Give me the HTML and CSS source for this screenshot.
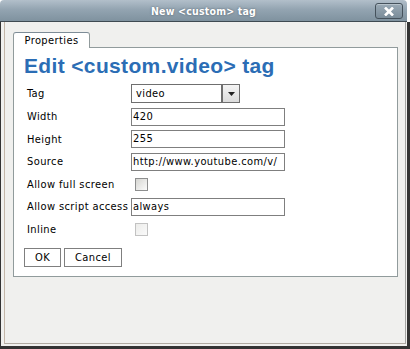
FILE: index.html
```html
<!DOCTYPE html>
<html lang="en">
<head>
    <meta charset="UTF-8">
    <title>New &lt;custom&gt; tag</title>
    <link rel="stylesheet" href="styles.css">
</head>
<body>
    <div class="window">
        <div class="titlebar">
            <span class="title">New &lt;custom&gt; tag</span>
            <span class="close">
                <svg width="10" height="9" viewBox="0 0 10 9">
                    <path d="M1 0.5 L9 8.5 M9 0.5 L1 8.5" stroke="#fff" stroke-width="2.6"/>
                </svg>
            </span>
        </div>
        <div class="frame">
            <div class="inner">
                <div class="tab">Properties</div>
                <div class="panel">
                    <h1>Edit &lt;custom.video&gt; tag</h1>
                    <div class="form">
                        <label>Tag</label>
                        <div class="select">
                            <span class="select-value">video</span>
                            <span class="select-arrow">
                                <svg width="7" height="4" viewBox="0 0 7 4"><path d="M0 0 H7 L3.5 4 Z" fill="#222"/></svg>
                            </span>
                        </div>

                        <label>Width</label>
                        <div class="field">420</div>

                        <label>Height</label>
                        <div class="field">255</div>

                        <label>Source</label>
                        <div class="field">http://www.youtube.com/v/</div>

                        <label>Allow full screen</label>
                        <span class="check"></span>

                        <label>Allow script access</label>
                        <div class="field">always</div>

                        <label>Inline</label>
                        <span class="check disabled"></span>
                    </div>
                    <div class="buttons">
                        <button class="ok">OK</button>
                        <button class="cancel">Cancel</button>
                    </div>
                </div>
            </div>
        </div>
    </div>
</body>
</html>
```

FILE: styles.css
```css
body {
    margin: 0;
    background-color: #fff;
    font-family: "DejaVu Sans Condensed", "DejaVu Sans", sans-serif;
    font-size: 11px;
    letter-spacing: 0.4px;
    color: #000;
}
.window {
    width: 410px;
    height: 349px;
    display: flex;
    flex-direction: column;
}
.titlebar {
    position: relative;
    width: 407px;
    height: 21px;
    border-bottom: 1px solid #3f4a52;
    border-radius: 4px 4px 0 0;
    background: linear-gradient(#b2bfca, #93a4b1 45%, #7f929f);
    display: flex;
    align-items: center;
    justify-content: center;
}
.title {
    color: #fff;
    font-weight: bold;
    font-size: 10.5px;
    letter-spacing: 0.2px;
    text-shadow: 0 0 2px rgba(40,50,60,0.6);
}
.close {
    position: absolute;
    left: 375px;
    top: 3px;
    width: 26px;
    height: 14px;
    border: 1px solid #45525c;
    border-radius: 3px;
    background: linear-gradient(#9aaab6, #7a8c99);
    box-shadow: inset 0 1px 0 rgba(255,255,255,0.3);
    display: flex;
    align-items: center;
    justify-content: center;
}
.frame {
    flex: 1;
    border-left: 1px solid #333;
    border-right: 3px solid #333;
    border-bottom: 3px solid #333;
    padding: 0 1px 2px 3px;
    background-color: #f0f0ee;
    display: flex;
}
.inner {
    flex: 1;
    border: 1px solid #c3b6a8;
    border-top: none;
    border-right-color: #a4a4a2;
    border-bottom-color: #b0aaa2;
    padding: 10px 7px 0 8px;
}
.tab {
    width: 75px;
    height: 15px;
    border: 1px solid #919b9c;
    border-top-color: #7d8c97;
    border-bottom: none;
    border-radius: 3px 3px 0 0;
    background-color: #fff;
    margin-bottom: -1px;
    position: relative;
    line-height: 16px;
    text-align: center;
}
.panel {
    border: 1px solid #919b9c;
    background-color: #fff;
    padding: 0 0 9px 10px;
}
h1 {
    margin: 6px 0 4px 0;
    font-family: "Liberation Sans", Arial, sans-serif;
    font-size: 21px;
    line-height: 24px;
    letter-spacing: 0.35px;
    font-weight: bold;
    color: #2b6db5;
}
.form {
    display: grid;
    grid-template-columns: 104px 1fr;
    grid-template-rows: 23px 23px 22px 23px 22px 23px 22px;
    align-items: center;
    padding-left: 3px;
}
.field {
    width: 150px;
    height: 16px;
    border: 1px solid #7f7f7f;
    padding: 0 1px;
    line-height: 16px;
    white-space: nowrap;
    overflow: hidden;
}
.select {
    width: 107px;
    height: 17px;
    border: 1px solid #6f6f6f;
    display: flex;
}
.select-value {
    flex: 1;
    padding-left: 4px;
    line-height: 17px;
}
.select-arrow {
    width: 16px;
    border-left: 2px solid #6f6f6f;
    background: linear-gradient(#f4f4f4, #dcdcdc);
    display: flex;
    align-items: center;
    justify-content: center;
}
.check {
    width: 11px;
    height: 11px;
    margin-left: 4px;
    border: 1px solid #8d8e8e;
    background: linear-gradient(135deg, #d6d6d2, #fbfbfb);
}
.check.disabled {
    border-color: #c2c2c2;
    background: linear-gradient(135deg, #ececea, #fafafa);
}
.buttons {
    margin-top: 8px;
    display: flex;
    gap: 3px;
}
button {
    height: 19px;
    border: 1px solid #7f7f7f;
    background-color: #fff;
    font-family: inherit;
    font-size: 11px;
    letter-spacing: 0.4px;
    padding: 0;
    color: #000;
}
.ok {
    width: 37px;
}
.cancel {
    width: 58px;
}
```
